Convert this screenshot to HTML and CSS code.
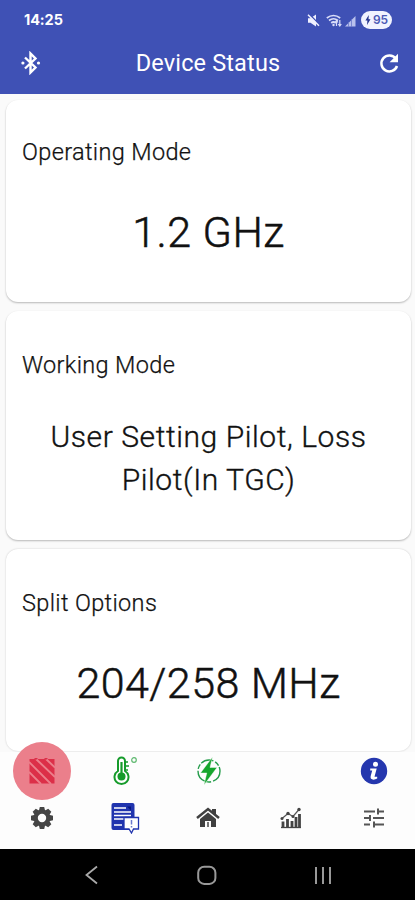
FILE: index.html
```html
<!DOCTYPE html>
<html lang="en">
<head>
<meta charset="utf-8">
<title>Device Status</title>
<link rel="stylesheet" href="styles.css">
</head>
<body>
<header class="top">
  <div class="statusbar">
    <span class="clock">14:25</span>
    <div class="signals">
      <svg width="13" height="13" viewBox="0 0 13 13"><path d="M1 4.300h2.500L9 .5v12L3.500 8.800H1z" fill="#f0f1ff"/><path d="M2 0l11 11" stroke="#3f51b5" stroke-width="1.500"/><path d="M1 .8l11 11" stroke="#f0f1ff" stroke-width="1.500"/></svg>
      <svg class="wifi" width="16" height="13" viewBox="0 0 16 13"><g fill="none" stroke="#d9ddf8" stroke-width="1.700"><path d="M.8 4Q7.500-1 14.200 4M3 6.500Q7.500 3 12 6.500M5.200 9Q7.500 7 9.800 9"/></g><circle cx="7.500" cy="11" r="1.200" fill="#d9ddf8"/><path d="M10.500 12V7m-1.500 1.500L10.500 6.500l1.500 2M13.800 6v5.500m-1.500-1.500l1.500 2 1.500-2" fill="none" stroke="#d9ddf8" stroke-width="1.200"/></svg>
      <svg class="cell" width="11" height="12" viewBox="0 0 11 12"><path d="M0 11.500L10.500 1v10.500z" fill="#b9c1ed"/><path d="M3.500 7v5M6.500 4v8" stroke="#6a79ca" stroke-width=".8"/></svg>
      <span class="battery"><svg width="6" height="10" viewBox="0 0 6 10"><path d="M3.800 0L.4 5.500h2L2 10l3.500-5.800h-2z" fill="#26358f"/></svg>95</span>
    </div>
  </div>
  <div class="appbar">
    <svg width="22" height="24" viewBox="0 0 22 24"><path d="M5 6.500l10.500 10-5 5v-19l5 5L5 17.500" fill="none" stroke="#fff" stroke-width="2.400"/><circle cx="2.900" cy="12" r="1.600" fill="#fff"/><circle cx="18.500" cy="12" r="1.600" fill="#fff"/></svg>
    <h1>Device Status</h1>
    <svg width="24" height="24" viewBox="0 0 24 24"><path d="M18.800 7.600A8 8 0 1 0 20 15" fill="none" stroke="#fff" stroke-width="2.500"/><path d="M21 2.800v8.400h-8.400z" fill="#fff"/></svg>
  </div>
</header>
<main class="content">
  <section class="card short"><h2>Operating Mode</h2><p class="value">1.2 GHz</p></section>
  <section class="card tall"><h2>Working Mode</h2><p class="value small">User Setting Pilot, Loss Pilot(In TGC)</p></section>
  <section class="card short last"><h2>Split Options</h2><p class="value">204/258 MHz</p></section>
</main>
<nav class="toolbar">
  <div class="row upper">
    <span class="alarm"><svg width="26" height="26" viewBox="0 0 26 26"><path d="M.5 1h25v24.500H.5z" fill="#dc2f48"/><path d="M0 14l12 12M0 4l22 22M7 1l19 18M17 1l9 8.500" fill="none" stroke="#eb7f8b" stroke-width="1.900"/><path d="M5 0l2 2 2-2zM15 0l2 2 2-2z" fill="#dc2f48"/></svg></span>
    <span><svg class="thermo" width="28" height="30" viewBox="0 0 28 30"><path d="M7 15V5a3.500 3.500 0 0 1 7 0v10a7 7 0 1 1-7 0z" fill="#fff" stroke="#169b2b" stroke-width="2"/><circle cx="10.500" cy="20.500" r="4" fill="#169b2b"/><path d="M10.500 6v14" stroke="#169b2b" stroke-width="2.200"/><path d="M14 6h3M14 10h4M14 14h3" stroke="#169b2b" stroke-width="1.300"/><circle cx="23" cy="4" r="2.300" fill="none" stroke="#5fb970" stroke-width="1.200"/></svg></span>
    <span><svg width="28" height="30" viewBox="0 0 28 30"><circle cx="15" cy="15" r="11" fill="none" stroke="#249c4a" stroke-width="1.400" stroke-dasharray="13 2 5 1.500"/><path d="M18.500 1L6.500 17h6.300L10 29 23 11.500h-7z" fill="#16a62d" stroke="#fff" stroke-width=".4"/></svg></span>
    <span></span>
    <span><svg width="28" height="28" viewBox="0 0 28 28"><circle cx="14" cy="14" r="13.200" fill="#2537ae"/><circle cx="15.500" cy="7.300" r="2.500" fill="#fff"/><path d="M10.200 11.500h6.500l-2.200 8.300h2.700v1.800q-2.300 1.300-4.500 1-2.700-.5-2-3.500l1.500-5.500h-2z" fill="#fff"/></svg></span>
  </div>
  <div class="row lower">
    <span><svg width="24" height="24" viewBox="0 0 24 24"><g fill="#454545"><path id="tooth" d="M9.800 1h4.400l1 4h-6.400z"/><use href="#tooth" transform="rotate(45 12 12)"/><use href="#tooth" transform="rotate(90 12 12)"/><use href="#tooth" transform="rotate(135 12 12)"/><use href="#tooth" transform="rotate(180 12 12)"/><use href="#tooth" transform="rotate(225 12 12)"/><use href="#tooth" transform="rotate(270 12 12)"/><use href="#tooth" transform="rotate(315 12 12)"/></g><circle cx="12" cy="12" r="6.200" fill="none" stroke="#454545" stroke-width="4"/></svg></span>
    <span><svg width="30" height="32" viewBox="0 0 30 32"><rect x="1.500" y="1" width="23" height="27" rx="2" fill="#2034ae"/><path d="M4 6h12M4 10h17M4 13.500h17M4 17h10M4 23h8" stroke="#fff" stroke-width="1.500"/><path d="M17 4.500h4v4z" fill="#07177f"/><path d="M15 15.500h13.500v11.500h-5L21.500 31l-2.500-4h-5V16z" fill="#fff" stroke="#2034ae" stroke-width="1.300"/><path d="M21.500 18v4.500m0 1.500v1.500" stroke="#6877cd" stroke-width="1.500"/></svg></span>
    <span><svg width="24" height="22" viewBox="0 0 24 22"><path d="M1 11L12 2l11 9" fill="none" stroke="#404040" stroke-width="2.500"/><path d="M16 2h4v7l-4-3zM4 12l8-6.500L20 12v8h-5v-6H9v6H4z" fill="#404040"/><path d="M11 15h2v5h-2z" fill="#777"/></svg></span>
    <span><svg width="24" height="24" viewBox="0 0 24 24"><path d="M2 21.500h20" stroke="#444" stroke-width="1.300"/><path d="M4 21v-5.500M8.500 21v-8M13 21v-6M17 21V11M20.500 21V8" stroke="#444" stroke-width="2.800"/><path d="M3 12.500l6-5 5 3 6-7" fill="none" stroke="#555" stroke-width="1.200"/><g fill="#444"><circle cx="3" cy="12.500" r="1.500"/><circle cx="9" cy="7.500" r="1.700"/><circle cx="14" cy="10.500" r="1.500"/><circle cx="20" cy="3.500" r="1.700"/></g></svg></span>
    <span><svg width="24" height="24" viewBox="0 0 24 24"><g fill="none" stroke="#555" stroke-width="2"><path d="M2 5.500h11M16 5.500h6M2 12h5M11 12h11M2 18.500h6M12 18.500h10"/><path d="M16 2.500v6M8 9v6M12 15.500v6"/></g></svg></span>
  </div>
</nav>
<footer class="system">
  <svg width="20" height="24" viewBox="0 0 20 24"><path d="M16 3.500L5.500 12 16 20.500" fill="none" stroke="#aaa" stroke-width="1.800"/></svg>
  <svg width="20" height="24" viewBox="0 0 20 24"><rect x="1.200" y="3.700" width="17.200" height="17.200" rx="6" fill="none" stroke="#999" stroke-width="2"/></svg>
  <svg width="20" height="24" viewBox="0 0 20 24"><path d="M2 4v17M9 4v17M16 4v17" stroke="#999" stroke-width="2"/></svg>
</footer>
</body>
</html>
```
FILE: styles.css
```css
* { box-sizing: border-box; }
body {
  margin: 0;
  width: 415px;
  height: 900px;
  display: flex;
  flex-direction: column;
  overflow: hidden;
  background: #fafafa;
  color: #111;
  font-family: Roboto, "Liberation Sans", sans-serif;
}
svg { display: block; flex: none; }
h1, h2, p { margin: 0; }
.top { height: 94px; flex: none; background: #3f51b5; color: #fff; }
.statusbar { height: 40px; display: flex; justify-content: space-between; align-items: center; padding: 0 23px 0 24px; }
.clock { font: 700 14.5px/20px Inter, sans-serif; letter-spacing: -.1px; }
.signals { display: flex; align-items: center; }
.wifi { margin-left: 6px; }
.cell { margin: 2px 5px 0 3px; }
.battery { width: 31px; height: 18px; border-radius: 9px; background: #f1f3ff; color: #4b5ab5; display: flex; align-items: center; justify-content: center; gap: 2px; font: 600 12px/18px Inter, sans-serif; }
.appbar { height: 46px; padding: 0 14px 0 20px; display: flex; align-items: center; justify-content: space-between; }
h1 { font-size: 23.5px; font-weight: 400; line-height: 30px; letter-spacing: .15px; margin-right: 3px; }
.content { flex: none; height: 658px; padding: 6px 4px 0 6px; display: flex; flex-direction: column; gap: 9px; }
.card { flex: none; background: #fff; border-radius: 12px; box-shadow: 0 1px 2px rgba(0,0,0,.27); padding: 39px 16px 0; }
.card:first-child { padding-top: 37px; }
.short { height: 202px; }
.last { box-shadow: 0 0 2px rgba(0,0,0,.2); }
.tall { height: 229px; }
h2 { font-size: 23.5px; line-height: 30px; font-weight: 300; letter-spacing: .35px; -webkit-text-stroke: .25px #111; }
.value { margin-top: 37px; text-align: center; font-size: 43px; line-height: 56px; font-weight: 300; letter-spacing: .45px; -webkit-text-stroke: .5px #111; }
.value.small { margin-top: 35px; font-size: 30px; line-height: 43px; letter-spacing: .58px; -webkit-text-stroke-width: .35px; }
.toolbar { flex: none; height: 97px; background: #fdfdfd; position: relative; }
.row { display: grid; grid-template-columns: repeat(5, 1fr); grid-template-rows: 100%; }
.row > span { display: flex; align-items: center; justify-content: center; }
.upper { height: 38px; }
.lower { height: 56px; }
.row > .alarm { width: 58px; height: 58px; border-radius: 50%; background: #eb7f8b; align-self: center; justify-self: center; }
.system { height: 51px; flex: none; background: #000; display: grid; grid-template-columns: 182px 50px 183px; align-items: center; justify-items: center; }
```
